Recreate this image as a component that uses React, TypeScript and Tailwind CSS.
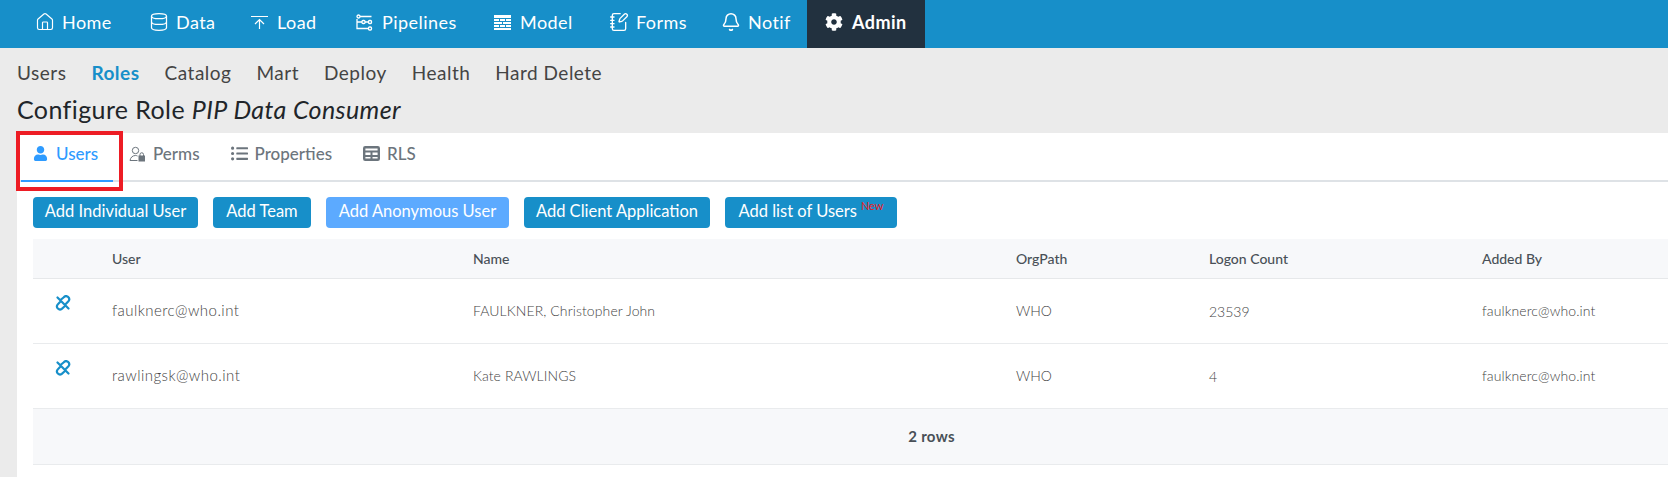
import { Bell, Database, Home, NotebookPen } from "lucide-react";
import { FaCog, FaListUl, FaUser } from "react-icons/fa";
import type { ReactNode } from "react";

const font = "font-['Lato','Liberation_Sans',sans-serif]";

function LoadIcon() {
  return (
    <svg width="17" height="17" viewBox="0 0 17 17" fill="none" stroke="currentColor" strokeWidth="1.2">
      <path d="M0 2.500h17M8.500 15V5.500M4 10l4.500-4.500L13 10" />
    </svg>
  );
}

function PipelinesIcon() {
  return (
    <svg width="17" height="17" viewBox="0 0 17 17" fill="none" stroke="currentColor" strokeWidth="1.3">
      <circle cx="2.500" cy="2.500" r="1.500" />
      <rect x="6" y="6.500" width="3" height="3" rx="1" />
      <rect x="12.500" y="6.500" width="3" height="3" rx="1" />
      <rect x="12.500" y="13" width="3" height="3" rx="1" />
      <path d="M4 2.500h11.500M1 8h5M9 8h3.500M1 5v9.500h11.500" />
    </svg>
  );
}

function ModelIcon() {
  return (
    <svg width="17" height="15" viewBox="0 0 17 15" fill="currentColor">
      <path d="M0 0h17v3H0zM0 4h5v2H0zM6 4h5v2H6zM12 4h5v2h-5zM0 7h8v2H0zM9 7h8v2H9zM0 10h5v2H0zM6 10h5v2H6zM12 10h5v2h-5zM0 13h17v2H0z" />
    </svg>
  );
}

function PermsIcon() {
  return (
    <svg width="16" height="16" viewBox="0 0 16 16" fill="none" stroke="currentColor" strokeWidth="1">
      <circle cx="6.500" cy="4.500" r="3.200" />
      <path d="M1 14.500c.5-3 2.500-5 5.500-5 .8 0 1.500 .2 2 .5M1 14.500h7.500" />
      <rect x="10" y="10" width="5.500" height="5" fill="currentColor" />
      <path d="M11 10V8.500a1.700 1.700 0 0 1 3.500 0V10" />
    </svg>
  );
}

function TableIcon() {
  return (
    <svg width="17" height="15" viewBox="0 0 17 15" fill="none" stroke="currentColor" strokeWidth="2.400">
      <rect x="1.200" y="1.200" width="14.600" height="12.600" rx="1" />
      <path d="M1 5.500h15M1 10h15M8.500 5.500V14" strokeWidth="2" />
    </svg>
  );
}

function UnlinkIcon() {
  return (
    <svg width="16" height="16" viewBox="0 0 16 16" fill="none" stroke="#178fc9" strokeWidth="2.200" strokeLinecap="round">
      <path d="M5.500 5 8.800 2.300a3 3 0 0 1 4.600 3.900L10.800 9M5 7 2.600 9.600a3 3 0 0 0 4.200 4.200L10 11M2.500 2.500l11 11" />
    </svg>
  );
}

function NavItem({ icon, label, width }: { icon: ReactNode; label: string; width: string }) {
  return (
    <div className={`flex items-center gap-[9px] pb-1 text-[18px] tracking-[0.45px] text-white ${width}`}>
      <span className="flex w-[17px] justify-center">{icon}</span>
      <span>{label}</span>
    </div>
  );
}

const subLinks = ["Users", "Roles", "Catalog", "Mart", "Deploy", "Health", "Hard Delete"];

const buttons = [
  { label: "Add Individual User", cls: "w-[165px] bg-[#178fc9]" },
  { label: "Add Team", cls: "w-[98px] bg-[#178fc9]" },
  { label: "Add Anonymous User", cls: "w-[183px] bg-[#5caaff]" },
  { label: "Add Client Application", cls: "w-[186px] bg-[#178fc9]" },
];

const rows = [
  { user: "faulknerc@who.int", name: "FAULKNER, Christopher John", count: "23539" },
  { user: "rawlingsk@who.int", name: "Kate RAWLINGS", count: "4" },
];

const cols = "grid grid-cols-[79px_361px_543px_193px_273px_1fr] items-center";

export default function App() {
  return (
    <div className={`h-[477px] w-[1668px] overflow-hidden bg-[#ebebeb] ${font}`}>
      <div className="flex h-12 items-center bg-[#178fc9] pl-9">
        <NavItem icon={<Home size={20} strokeWidth={1.4} className="shrink-0" />} label="Home" width="w-[114px]" />
        <NavItem icon={<Database size={20} strokeWidth={1.5} className="shrink-0" />} label="Data" width="w-[101px]" />
        <NavItem icon={<LoadIcon />} label="Load" width="w-[105px]" />
        <NavItem icon={<PipelinesIcon />} label="Pipelines" width="w-[138px]" />
        <NavItem icon={<ModelIcon />} label="Model" width="w-[116px]" />
        <NavItem icon={<NotebookPen size={20} strokeWidth={1.6} className="shrink-0" />} label="Forms" width="w-[112px]" />
        <NavItem icon={<Bell size={20} strokeWidth={1.8} className="shrink-0" />} label="Notif" width="w-[85px]" />
        <div className="flex h-12 w-[118px] items-center gap-[9px] bg-[#22313f] pb-1 pl-[18px] text-[18px] font-bold tracking-[0.45px] text-white">
          <FaCog size={18} />
          <span>Admin</span>
        </div>
      </div>

      <div className="flex h-[85px] flex-col pl-[17px] pt-[12px]">
        <div className="flex h-[27px] items-center gap-[25px] text-[19px] tracking-[0.5px] text-[#444]">
          {subLinks.map((l) => (
            <span key={l} className={l === "Roles" ? "font-bold text-[#178fc9]" : ""}>
              {l}
            </span>
          ))}
        </div>
        <h1 className="mt-[7px] text-[25px] leading-[30px] tracking-[0.4px] text-[#212529]">
          Configure Role <em>PIP Data Consumer</em>
        </h1>
      </div>

      <div className="relative ml-[17px] h-[344px] bg-white">
        <div className="flex h-[49px] border-b-2 border-[#dee2e6] text-[17px] font-medium text-[#6c757d]">
          <div className="ml-1 flex h-[49px] w-[92px] items-center gap-2 border-b-2 border-[#2e9bff] pb-[6px] pl-3 text-[#2e9bff]">
            <FaUser size={15} />
            <span>Users</span>
          </div>
          <div className="ml-4 flex items-center gap-2 pb-[6px]">
            <PermsIcon />
            <span>Perms</span>
          </div>
          <div className="ml-[31px] flex items-center gap-[7px] pb-[6px]">
            <FaListUl size={17} />
            <span>Properties</span>
          </div>
          <div className="ml-[31px] flex items-center gap-[7px] pb-[6px]">
            <TableIcon />
            <span>RLS</span>
          </div>
        </div>

        <div className="absolute left-[-1px] top-[-2px] h-[60px] w-[107px] border-4 border-[#ed1c24]" />

        <div className="pl-4">
          <div className="mt-[15px] flex gap-[15px] text-[16.5px] text-white">
            {buttons.map((b) => (
              <div key={b.label} className={`flex h-[31px] items-center justify-center rounded pb-[3px] ${b.cls}`}>
                {b.label}
              </div>
            ))}
            <div className="flex h-[31px] w-[172px] items-center justify-center rounded bg-[#178fc9] pb-[3px]">
              Add list of Users
              <sup className="ml-1 text-[11px] text-[#ed1c24]">New</sup>
            </div>
          </div>

          <div className={`${cols} mt-[11px] h-10 border-b border-[#e6e8ea] bg-[#f7f8fa] text-[14px] font-medium text-[#495057]`}>
            <span />
            <span>User</span>
            <span>Name</span>
            <span>OrgPath</span>
            <span>Logon Count</span>
            <span>Added By</span>
          </div>
          {rows.map((r) => (
            <div key={r.user} className={`${cols} h-[65px] border-b border-[#e9ebed] pb-[2px] text-[14px] font-light text-[#444]`}>
              <span className="mb-[14px] pl-[22px]">
                <UnlinkIcon />
              </span>
              <span className="text-[15px] tracking-[0.45px]">{r.user}</span>
              <span className="tracking-[0.1px]">{r.name}</span>
              <span>WHO</span>
              <span className="pt-[3px]">{r.count}</span>
              <span className="tracking-[0.1px]">faulknerc@who.int</span>
            </div>
          ))}
          <div className="flex h-[56px] items-center justify-center border-b border-[#e9ebed] bg-[#f7f8fa] pl-[162px] text-[15px] font-bold tracking-[0.3px] text-[#495057]">
            2 rows
          </div>
        </div>
      </div>
    </div>
  );
}
